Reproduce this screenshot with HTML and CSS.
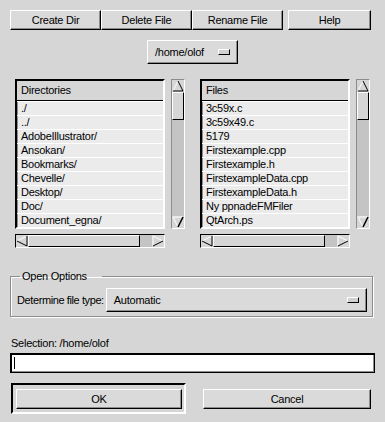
FILE: index.html
```html
<!DOCTYPE html>
<html>
<head>
<title>Open File</title>
<link rel="stylesheet" href="styles.css">
</head>
<body>
<div class="dialog">

  <div class="toolbar">
    <div class="btn-group">
      <button class="btn tool">Create Dir</button>
      <button class="btn tool">Delete File</button>
      <button class="btn tool">Rename File</button>
    </div>
    <button class="btn help">Help</button>
  </div>

  <div class="path-row">
    <div class="combo path"><span>/home/olof</span><i class="combo-ind"></i></div>
  </div>

  <div class="lists">
    <div class="pane">
      <div class="pane-top">
        <div class="list">
          <div class="list-head">Directories</div>
          <div class="row">./</div>
          <div class="row">../</div>
          <div class="row">AdobeIllustrator/</div>
          <div class="row">Ansokan/</div>
          <div class="row">Bookmarks/</div>
          <div class="row">Chevelle/</div>
          <div class="row">Desktop/</div>
          <div class="row">Doc/</div>
          <div class="row">Document_egna/</div>
        </div>
        <div class="vscroll">
          <svg class="arrow" width="12" height="12" viewBox="0 0 12 12"><path d="M1 11 L6 1" stroke="#fff" fill="none"/><path d="M6 1 L11 11 L1 11" stroke="#000" fill="none"/></svg>
          <div class="thumb v"></div>
          <div class="trough"></div>
          <svg class="arrow" width="12" height="12" viewBox="0 0 12 12"><path d="M1 1 L11 1 M1 1 L6 11" stroke="#fff" fill="none"/><path d="M6 11 L11 1" stroke="#000" stroke-width="1.5" fill="none"/></svg>
        </div>
      </div>
      <div class="hscroll">
        <svg class="arrow" width="12" height="12" viewBox="0 0 12 12"><path d="M1 6 L11 1" stroke="#fff" fill="none"/><path d="M1 6 L11 11 L11 1" stroke="#000" fill="none"/></svg>
        <div class="thumb h"></div>
        <div class="trough"></div>
        <svg class="arrow" width="12" height="12" viewBox="0 0 12 12"><path d="M1 1 L11 6 M1 1 L1 11" stroke="#fff" fill="none"/><path d="M1 11 L11 6" stroke="#000" fill="none"/></svg>
      </div>
    </div>

    <div class="pane">
      <div class="pane-top">
        <div class="list">
          <div class="list-head">Files</div>
          <div class="row">3c59x.c</div>
          <div class="row">3c59x49.c</div>
          <div class="row">5179</div>
          <div class="row">Firstexample.cpp</div>
          <div class="row">Firstexample.h</div>
          <div class="row">FirstexampleData.cpp</div>
          <div class="row">FirstexampleData.h</div>
          <div class="row">Ny ppnadeFMFiler</div>
          <div class="row">QtArch.ps</div>
        </div>
        <div class="vscroll">
          <svg class="arrow" width="12" height="12" viewBox="0 0 12 12"><path d="M1 11 L6 1" stroke="#fff" fill="none"/><path d="M6 1 L11 11 L1 11" stroke="#000" fill="none"/></svg>
          <div class="thumb v"></div>
          <div class="trough"></div>
          <svg class="arrow" width="12" height="12" viewBox="0 0 12 12"><path d="M1 1 L11 1 M1 1 L6 11" stroke="#fff" fill="none"/><path d="M6 11 L11 1" stroke="#000" stroke-width="1.5" fill="none"/></svg>
        </div>
      </div>
      <div class="hscroll">
        <svg class="arrow" width="12" height="12" viewBox="0 0 12 12"><path d="M1 6 L11 1" stroke="#fff" fill="none"/><path d="M1 6 L11 11 L11 1" stroke="#000" fill="none"/></svg>
        <div class="thumb h"></div>
        <div class="trough"></div>
        <svg class="arrow" width="12" height="12" viewBox="0 0 12 12"><path d="M1 1 L11 6 M1 1 L1 11" stroke="#fff" fill="none"/><path d="M1 11 L11 6" stroke="#000" fill="none"/></svg>
      </div>
    </div>
  </div>

  <fieldset class="options">
    <legend>Open Options</legend>
    <span class="opt-label">Determine file type:</span>
    <div class="combo type"><span>Automatic</span><i class="combo-ind"></i></div>
  </fieldset>

  <div class="sel-label">Selection: /home/olof</div>
  <div class="sel-input"><span class="caret"></span></div>

  <div class="actions">
    <div class="default-frame"><button class="btn ok">OK</button></div>
    <button class="btn cancel">Cancel</button>
  </div>

</div>
</body>
</html>
```

FILE: styles.css
```css
body {
  margin: 0;
  background: #d6d6d6;
  color: #000;
  font-family: "Liberation Sans", Arial, sans-serif;
  font-size: 11px;
  letter-spacing: -0.25px;
}

.dialog {
  padding: 10px 10px 0 10px;
  display: flex;
  flex-direction: column;
}

/* raised motif style button */
.btn {
  font: inherit;
  letter-spacing: inherit;
  color: #000;
  background: #dadada;
  border: 1px solid;
  border-color: #fff #000 #000 #fff;
  box-shadow: inset -1px -1px 0 #8c8c8c;
  padding: 0;
  height: 20px;
}

.toolbar {
  display: flex;
  gap: 5px;
}
.btn-group {
  display: flex;
}
.tool {
  width: 91px;
}
.help {
  width: 83px;
}

.path-row {
  margin-top: 10px;
  padding-left: 137px;
}

.combo {
  display: flex;
  align-items: center;
  justify-content: space-between;
  background: #dadada;
  border: 1px solid;
  border-color: #fff #000 #000 #fff;
  box-shadow: inset -1px -1px 0 #8c8c8c;
  box-sizing: border-box;
}
.path {
  width: 91px;
  height: 24px;
  padding: 0 7px 0 7px;
}
.combo-ind {
  width: 12px;
  height: 6px;
  box-sizing: border-box;
  border: 1px solid;
  border-color: #fff #000 #000 #fff;
  background: #d0d0d0;
}

.lists {
  display: flex;
  gap: 15px;
  margin-top: 15px;
  padding-left: 5px;
}
.pane {
  width: 170px;
}
.pane-top {
  display: flex;
  justify-content: space-between;
  height: 150px;
}

.list {
  width: 150px;
  box-sizing: border-box;
  border: 2px solid;
  border-color: #000 #fff #fff #000;
  box-shadow: inset 1px 1px 0 #8c8c8c;
  background: #ebebeb;
  overflow: hidden;
}
.list-head {
  height: 19px;
  line-height: 19px;
  padding-left: 4px;
  background: #d6d6d6;
  border-bottom: 1px solid #000;
}
.row {
  height: 13px;
  line-height: 13px;
  padding-left: 4px;
  border-top: 1px solid #fff;
  white-space: nowrap;
}

.vscroll {
  width: 14px;
  box-sizing: border-box;
  border: 1px solid;
  border-color: #8c8c8c #fff #fff #8c8c8c;
  display: flex;
  flex-direction: column;
  background: #c4c4c4;
}
.hscroll {
  width: 150px;
  height: 14px;
  margin-top: 5px;
  box-sizing: border-box;
  border: 1px solid;
  border-color: #000 #fff #fff #000;
  display: flex;
  background: #c4c4c4;
}
.arrow {
  flex: none;
  background: #d6d6d6;
}
.thumb {
  box-sizing: border-box;
  background: #d6d6d6;
  border: 1px solid;
  border-color: #fff #000 #000 #fff;
  flex: none;
}
.thumb.v {
  height: 28px;
}
.thumb.h {
  width: 112px;
}
.trough {
  flex: 1;
}

.options {
  margin: 22px 2px 0 0;
  padding: 5px 5px 4px 6px;
  border: 1px solid #8c8c8c;
  box-shadow: 1px 1px 0 #fff, inset 1px 1px 0 #fff;
  display: flex;
  align-items: center;
}
.options legend {
  margin-left: 3px;
  padding: 0 15px 0 2px;
  line-height: 13px;
}
.opt-label {
  flex: none;
  white-space: nowrap;
  letter-spacing: -0.4px;
  margin-right: 2px;
}
.type {
  flex: 1;
  height: 24px;
  padding: 0 7px 0 7px;
}

.sel-label {
  margin-top: 20px;
  padding-left: 1px;
  line-height: 13px;
}
.sel-input {
  margin-top: 3px;
  height: 20px;
  box-sizing: border-box;
  background: #fff;
  border: 1px solid #000;
  box-shadow: inset 1px 1px 0 #000, inset -1px -1px 0 #8c8c8c;
  display: flex;
  align-items: center;
  padding-left: 3px;
}
.caret {
  width: 1px;
  height: 12px;
  background: #000;
}

.actions {
  display: flex;
  align-items: center;
  justify-content: space-between;
  margin-top: 10px;
  padding-left: 1px;
  padding-right: 4px;
}
.default-frame {
  width: 175px;
  height: 31px;
  box-sizing: border-box;
  border: 2px solid;
  border-color: #000 #fff #fff #000;
  padding: 4px 3px 0 3px;
}
.ok {
  width: 166px;
}
.cancel {
  width: 168px;
}
```
